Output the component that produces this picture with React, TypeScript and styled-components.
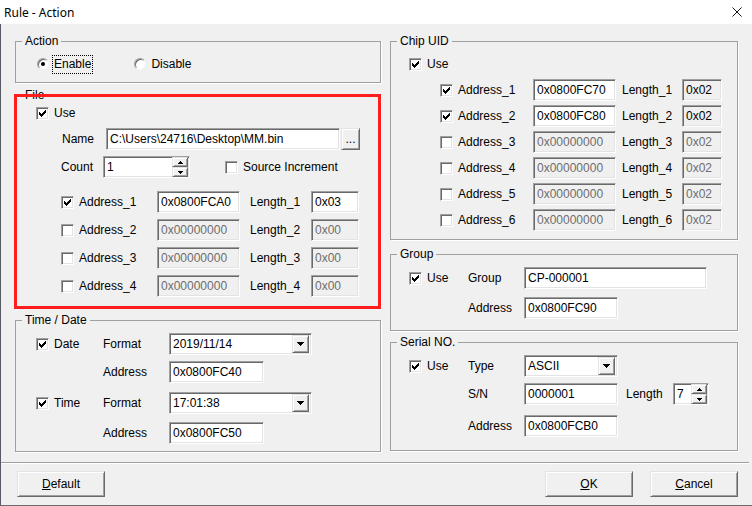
import React from "react";
import styled, { createGlobalStyle } from "styled-components";

type FieldState = "normal" | "disabled" | "readonly";

const fileRows = [
  { n: 1, on: true, addr: "0x0800FCA0", len: "0x03" },
  { n: 2, on: false, addr: "0x00000000", len: "0x00" },
  { n: 3, on: false, addr: "0x00000000", len: "0x00" },
  { n: 4, on: false, addr: "0x00000000", len: "0x00" },
];

const chipRows = [
  { n: 1, on: true, addr: "0x0800FC70", len: "0x02" },
  { n: 2, on: true, addr: "0x0800FC80", len: "0x02" },
  { n: 3, on: false, addr: "0x00000000", len: "0x02" },
  { n: 4, on: false, addr: "0x00000000", len: "0x02" },
  { n: 5, on: false, addr: "0x00000000", len: "0x02" },
  { n: 6, on: false, addr: "0x00000000", len: "0x02" },
];

const CheckBox = ({ checked, label }: { checked?: boolean; label?: string }) => (
  <CheckItem>
    <Box>
      {checked && (
        <svg width="7" height="7" viewBox="0 0 7 7" shapeRendering="crispEdges">
          <polygon points="0,2 2,4 7,-1 7,2 2,7 0,5" fill="#000" />
        </svg>
      )}
    </Box>
    {label && <span>{label}</span>}
  </CheckItem>
);

const Arrow = ({ up }: { up?: boolean }) => (
  <svg width="7" height="4" viewBox="0 0 7 4" shapeRendering="crispEdges">
    <polygon points={up ? "3.5,0 7,4 0,4" : "0,0 7,0 3.5,4"} fill="#000" />
  </svg>
);

const SmallArrow = ({ up }: { up?: boolean }) => (
  <svg width="5" height="3" viewBox="0 0 5 3" shapeRendering="crispEdges">
    <polygon points={up ? "2.5,0 5,3 0,3" : "0,0 5,0 2.5,3"} fill="#000" />
  </svg>
);

const ComboBox = ({ w, value }: { w: number; value: string }) => (
  <Combo $w={w}>
    <ComboText>{value}</ComboText>
    <DropButton>
      <Arrow />
    </DropButton>
  </Combo>
);

const SpinEdit = ({ w, value }: { w: number; value: string }) => (
  <Spin $w={w}>
    <ComboText>{value}</ComboText>
    <SpinButtons>
      <SpinButton>
        <SmallArrow up />
      </SpinButton>
      <SpinButton>
        <SmallArrow />
      </SpinButton>
    </SpinButtons>
  </Spin>
);

const App = () => {
  return (
    <>
      <GlobalStyle />
      <Window>
        <TitleBar>
          <Title>Rule - Action</Title>
          <svg width="10" height="10" viewBox="0 0 10 10">
            <path d="M0.5,0.5 L9.5,9.5 M9.5,0.5 L0.5,9.5" stroke="#111" strokeWidth="1" />
          </svg>
        </TitleBar>

        <Client>
          <Columns>
            <Column $w={366}>
              <GroupBox $h={48}>
                <Legend>Action</Legend>
                <Row $mt={7} $pl={21} $h={18}>
                  <RadioItem>
                    <RadioCircle $on />
                    <FocusLabel>Enable</FocusLabel>
                  </RadioItem>
                  <RadioItem $ml={42}>
                    <RadioCircle />
                    <span>Disable</span>
                  </RadioItem>
                </Row>
              </GroupBox>

              <Annotated $mt={6}>
                <GroupBox $h={219}>
                  <Legend>File</Legend>
                  <Row $pl={20}>
                    <CheckBox checked label="Use" />
                  </Row>
                  <Row $mt={4} $pl={46}>
                    <Cell $w={44}>Name</Cell>
                    <Edit $w={234} readOnly value="C:\Users\24716\Desktop\MM.bin" />
                    <PushButton $w={19} $h={22} $ml={1}>...</PushButton>
                  </Row>
                  <Row $mt={6} $pl={45}>
                    <Cell $w={42}>Count</Cell>
                    <SpinEdit w={87} value="1" />
                    <Cell $w={140} $ml={35}>
                      <CheckBox label="Source Increment" />
                    </Cell>
                  </Row>
                  {fileRows.map((r, i) => (
                    <Row key={r.n} $mt={i === 0 ? 13 : 6} $pl={45}>
                      <Cell $w={96}>
                        <CheckBox checked={r.on} label={`Address_${r.n}`} />
                      </Cell>
                      <Edit $w={83} $state={r.on ? "normal" : "disabled"} readOnly value={r.addr} />
                      <Cell $w={61} $ml={10}>{`Length_${r.n}`}</Cell>
                      <Edit $w={48} $state={r.on ? "normal" : "disabled"} readOnly value={r.len} />
                    </Row>
                  ))}
                </GroupBox>
                <RedFrame />
              </Annotated>

              <GroupBox $h={138} $mt={6}>
                <Legend>Time / Date</Legend>
                <Row $mt={6} $pl={20}>
                  <Cell $w={67}>
                    <CheckBox checked label="Date" />
                  </Cell>
                  <Cell $w={66}>Format</Cell>
                  <ComboBox w={143} value="2019/11/14" />
                </Row>
                <Row $mt={6} $pl={87}>
                  <Cell $w={66}>Address</Cell>
                  <Edit $w={95} readOnly value="0x0800FC40" />
                </Row>
                <Row $mt={9} $pl={20}>
                  <Cell $w={67}>
                    <CheckBox checked label="Time" />
                  </Cell>
                  <Cell $w={66}>Format</Cell>
                  <ComboBox w={143} value="17:01:38" />
                </Row>
                <Row $mt={8} $pl={87}>
                  <Cell $w={66}>Address</Cell>
                  <Edit $w={95} readOnly value="0x0800FC50" />
                </Row>
              </GroupBox>
            </Column>

            <Column $w={348}>
              <GroupBox $h={205}>
                <Legend>Chip UID</Legend>
                <Row $mt={5} $pl={18}>
                  <CheckBox checked label="Use" />
                </Row>
                {chipRows.map((r) => (
                  <Row key={r.n} $mt={4} $pl={49}>
                    <Cell $w={93}>
                      <CheckBox checked={r.on} label={`Address_${r.n}`} />
                    </Cell>
                    <Edit $w={83} $state={r.on ? "normal" : "disabled"} readOnly value={r.addr} />
                    <Cell $w={60} $ml={6}>{`Length_${r.n}`}</Cell>
                    <Edit $w={40} $state={r.on ? "readonly" : "disabled"} readOnly value={r.len} />
                  </Row>
                ))}
              </GroupBox>

              <GroupBox $h={83} $mt={8}>
                <Legend>Group</Legend>
                <Row $mt={6} $pl={18}>
                  <Cell $w={59}>
                    <CheckBox checked label="Use" />
                  </Cell>
                  <Cell $w={56}>Group</Cell>
                  <Edit $w={183} readOnly value="CP-000001" />
                </Row>
                <Row $mt={8} $pl={77}>
                  <Cell $w={56}>Address</Cell>
                  <Edit $w={94} readOnly value="0x0800FC90" />
                </Row>
              </GroupBox>

              <GroupBox $h={115} $mt={5}>
                <Legend>Serial NO.</Legend>
                <Row $mt={6} $pl={18}>
                  <Cell $w={59}>
                    <CheckBox checked label="Use" />
                  </Cell>
                  <Cell $w={56}>Type</Cell>
                  <ComboBox w={94} value="ASCII" />
                </Row>
                <Row $mt={6} $pl={77}>
                  <Cell $w={56}>S/N</Cell>
                  <Edit $w={94} readOnly value="0000001" />
                  <Cell $w={47} $ml={8}>Length</Cell>
                  <SpinEdit w={36} value="7" />
                </Row>
                <Row $mt={10} $pl={77}>
                  <Cell $w={56}>Address</Cell>
                  <Edit $w={94} readOnly value="0x0800FCB0" />
                </Row>
              </GroupBox>
            </Column>
          </Columns>

          <Separator />

          <Footer>
            <PushButton $w={88} $h={26}>
              <Key>D</Key>efault
            </PushButton>
            <FooterRight>
              <PushButton $w={88} $h={26}>
                <Key>O</Key>K
              </PushButton>
              <PushButton $w={88} $h={26}>
                <Key>C</Key>ancel
              </PushButton>
            </FooterRight>
          </Footer>
        </Client>
      </Window>
    </>
  );
};

const GlobalStyle = createGlobalStyle`
  html, body {
    margin: 0;
    padding: 0;
    background: #f0f0f0;
  }
  body {
    font-family: "Liberation Sans", Arial, sans-serif;
    font-size: 12px;
    color: #000;
  }
  * {
    box-sizing: border-box;
  }
`;

const Window = styled.div`
  width: 752px;
  height: 506px;
  display: flex;
  flex-direction: column;
  background: #f0f0f0;
  overflow: hidden;
`;

const TitleBar = styled.div`
  height: 24px;
  flex-shrink: 0;
  background: #fff;
  display: flex;
  align-items: center;
  justify-content: space-between;
  padding: 0 10px 0 4px;
`;

const Title = styled.span`
  font-family: "Noto Sans", "Open Sans", sans-serif;
  font-size: 12px;
  color: #000;
`;

const Client = styled.div`
  flex: 1;
  display: flex;
  flex-direction: column;
  border-left: 1px solid #565b63;
  border-bottom: 1px solid #6b6b6b;
  padding-top: 11px;
`;

const Columns = styled.div`
  display: flex;
  gap: 9px;
  padding: 0 14px;
`;

const Column = styled.div<{ $w: number }>`
  width: ${(p) => p.$w}px;
  display: flex;
  flex-direction: column;
`;

const GroupBox = styled.fieldset<{ $h: number; $mt?: number }>`
  margin: ${(p) => p.$mt ?? 0}px 0 0;
  padding: 0;
  min-width: 0;
  height: ${(p) => p.$h}px;
  border: 1px solid #a0a0a0;
  box-shadow: 1px 1px #fff;
`;

const Legend = styled.legend`
  margin-left: 6px;
  padding: 0 3px;
  font-size: 12px;
  line-height: 13px;
`;

const Annotated = styled.div<{ $mt?: number }>`
  position: relative;
  margin-top: ${(p) => p.$mt ?? 0}px;
`;

const RedFrame = styled.div`
  position: absolute;
  top: 5px;
  left: -1px;
  right: 0;
  bottom: -1px;
  border: 3px solid #ff1d1d;
  pointer-events: none;
`;

const Row = styled.div<{ $mt?: number; $pl?: number; $h?: number }>`
  display: flex;
  align-items: center;
  height: ${(p) => p.$h ?? 22}px;
  margin-top: ${(p) => p.$mt ?? 0}px;
  padding-left: ${(p) => p.$pl ?? 0}px;
  white-space: nowrap;
`;

const Cell = styled.div<{ $w: number; $ml?: number }>`
  width: ${(p) => p.$w}px;
  margin-left: ${(p) => p.$ml ?? 0}px;
  flex-shrink: 0;
  display: flex;
  align-items: center;
`;

const CheckItem = styled.label`
  display: inline-flex;
  align-items: center;
  gap: 5px;
`;

const Box = styled.span`
  width: 13px;
  height: 13px;
  flex-shrink: 0;
  background: #fff;
  border: 1px solid;
  border-color: #a0a0a0 #fff #fff #a0a0a0;
  box-shadow: inset 1px 1px #696969, inset -1px -1px #e3e3e3;
  display: inline-flex;
  align-items: center;
  justify-content: center;
`;

const RadioItem = styled.label<{ $ml?: number }>`
  display: inline-flex;
  align-items: center;
  gap: 5px;
  margin-left: ${(p) => p.$ml ?? 0}px;
`;

const RadioCircle = styled.span<{ $on?: boolean }>`
  width: 12px;
  height: 12px;
  flex-shrink: 0;
  border-radius: 50%;
  background: #fff;
  border: 1px solid;
  border-color: #a0a0a0 #f4f4f4 #f4f4f4 #a0a0a0;
  box-shadow: inset 1px 1px #696969;
  display: inline-flex;
  align-items: center;
  justify-content: center;

  &::after {
    content: "";
    display: ${(p) => (p.$on ? "block" : "none")};
    width: 4px;
    height: 4px;
    border-radius: 50%;
    background: #000;
  }
`;

const FocusLabel = styled.span`
  margin-left: -1px;
  padding: 1px 1px 2px;
  outline: 1px dotted #000;
  line-height: 14px;
`;

const Edit = styled.input<{ $w: number; $state?: FieldState }>`
  width: ${(p) => p.$w}px;
  height: 22px;
  flex-shrink: 0;
  margin: 0;
  padding: 0 0 0 3px;
  font: inherit;
  outline: none;
  border: 1px solid;
  border-color: #a0a0a0 #fff #fff #a0a0a0;
  box-shadow: inset 1px 1px #696969, inset -1px -1px #e3e3e3;
  background: ${(p) => (p.$state && p.$state !== "normal" ? "#f0f0f0" : "#fff")};
  color: ${(p) => (p.$state === "disabled" ? "#6d6d6d" : "#000")};
`;

const Combo = styled.div<{ $w: number }>`
  width: ${(p) => p.$w}px;
  height: 22px;
  flex-shrink: 0;
  display: flex;
  align-items: center;
  padding: 0 2px 0 3px;
  background: #fff;
  border: 1px solid;
  border-color: #a0a0a0 #fff #fff #a0a0a0;
  box-shadow: inset 1px 1px #696969, inset -1px -1px #e3e3e3;
`;

const ComboText = styled.span`
  flex: 1;
  overflow: hidden;
`;

const raised = `
  background: #f0f0f0;
  border: 1px solid;
  border-color: #e3e3e3 #696969 #696969 #e3e3e3;
  box-shadow: inset 1px 1px #fff, inset -1px -1px #a0a0a0;
`;

const DropButton = styled.span`
  width: 17px;
  height: 18px;
  display: flex;
  align-items: center;
  justify-content: center;
  ${raised}
`;

const Spin = styled(Combo)`
  padding: 0 1px 0 3px;
`;

const SpinButtons = styled.div`
  width: 16px;
  height: 20px;
  display: flex;
  flex-direction: column;
`;

const SpinButton = styled.span`
  flex: 1;
  display: flex;
  align-items: center;
  justify-content: center;
  ${raised}
`;

const PushButton = styled.button<{ $w: number; $h: number; $ml?: number }>`
  width: ${(p) => p.$w}px;
  height: ${(p) => p.$h}px;
  margin: 0 0 0 ${(p) => p.$ml ?? 0}px;
  padding: 0;
  flex-shrink: 0;
  font: inherit;
  color: #000;
  cursor: default;
  ${raised}
`;

const Key = styled.span`
  text-decoration: underline;
`;

const Separator = styled.div`
  height: 2px;
  margin: 10px 3px 0 0;
  border-top: 1px solid #a0a0a0;
  border-bottom: 1px solid #fff;
`;

const Footer = styled.div`
  display: flex;
  justify-content: space-between;
  padding: 7px 14px 0 16px;
`;

const FooterRight = styled.div`
  display: flex;
  gap: 17px;
`;

export default App;
